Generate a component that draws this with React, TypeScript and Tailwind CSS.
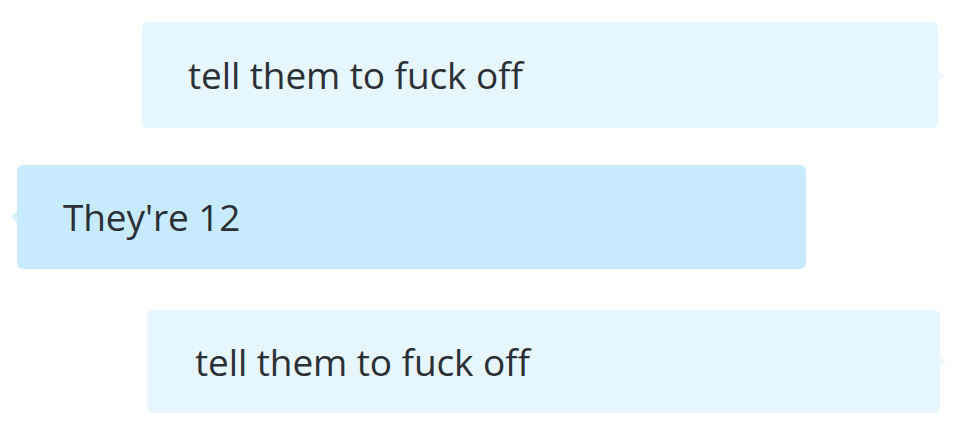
export default function App() {
  return (
    <div className="w-[960px] h-[428px] bg-white overflow-hidden flex flex-col font-['Open_Sans',sans-serif] text-[#2b3036]">
      {/* outgoing */}
      <div className="relative mt-[22px] ml-[142px] w-[796px] h-[106px] rounded-md bg-[#e7f6fd] flex items-center pl-[46px]">
        <span className="text-[37px] tracking-[-0.1px]">tell them to fuck off</span>
        <span className="absolute -right-[6px] top-[48px] w-0 h-0 border-y-[6px] border-y-transparent border-l-[6px] border-l-[#eef8fd]" />
      </div>

      {/* incoming */}
      <div className="relative mt-[37px] ml-[17px] w-[789px] h-[104px] rounded-md bg-[#c7eafc] flex items-center pl-[46px]">
        <span className="text-[37px] tracking-[-0.1px]">They're 12</span>
        <span className="absolute -left-[6px] top-[46px] w-0 h-0 border-y-[6px] border-y-transparent border-r-[6px] border-r-[#dbf0fb]" />
      </div>

      {/* outgoing */}
      <div className="relative mt-[41px] ml-[147px] w-[793px] h-[103px] rounded-md bg-[#e7f6fd] flex items-center pl-[48px]">
        <span className="text-[37px] tracking-[-0.1px]">tell them to fuck off</span>
        <span className="absolute -right-[6px] top-[46px] w-0 h-0 border-y-[6px] border-y-transparent border-l-[6px] border-l-[#eef8fd]" />
      </div>
    </div>
  );
}
